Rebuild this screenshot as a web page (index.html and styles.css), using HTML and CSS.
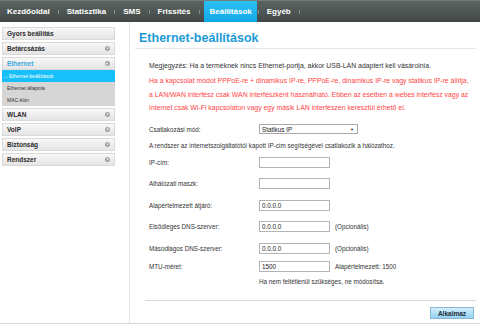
FILE: index.html
```html
<!DOCTYPE html>
<html lang="hu">
<head>
    <meta charset="UTF-8">
    <title>Ethernet-beállítások</title>
    <link rel="stylesheet" href="styles.css">
</head>
<body>
    <!-- FELSŐ MENÜ -->
    <nav class="topnav">
        <a href="#" class="tab">Kezdőoldal</a><span class="sep"></span>
        <a href="#" class="tab">Statisztika</a><span class="sep"></span>
        <a href="#" class="tab">SMS</a><span class="sep"></span>
        <a href="#" class="tab">Frissítés</a><span class="sep"></span>
        <a href="#" class="tab active">Beállítások</a><span class="sep"></span>
        <a href="#" class="tab">Egyéb</a><span class="sep"></span>
    </nav>

    <div class="layout">
        <!-- OLDALSÁV -->
        <aside class="sidebar">
            <a href="#" class="side-item">Gyors beállítás</a>
            <a href="#" class="side-item has-sub">Betárcsázás<span class="dot"></span></a>
            <div class="side-group">
                <a href="#" class="side-item open">Ethernet<span class="dot down"></span></a>
                <div class="submenu">
                    <a href="#" class="sub-item current">Ethernet-beállítások</a>
                    <a href="#" class="sub-item">Ethernet állapota</a>
                    <a href="#" class="sub-item">MAC-klón</a>
                </div>
            </div>
            <a href="#" class="side-item has-sub">WLAN<span class="dot"></span></a>
            <a href="#" class="side-item has-sub">VoIP<span class="dot"></span></a>
            <a href="#" class="side-item has-sub">Biztonság<span class="dot"></span></a>
            <a href="#" class="side-item has-sub">Rendszer<span class="dot"></span></a>
        </aside>

        <!-- TARTALOM -->
        <main class="main">
            <h1 class="page-title">Ethernet-beállítások</h1>

            <div class="content">
                <p class="note">Megjegyzés: Ha a terméknek nincs Ethernet-portja, akkor USB-LAN adaptert kell vásárolnia.</p>
                <p class="warning">Ha a kapcsolat módot PPPoE-re + dinamikus IP-re, PPPoE-re, dinamikus IP-re vagy statikus IP-re állítja, a LAN/WAN interfész csak WAN interfészként használható. Ebben az esetben a webes interfész vagy az Internet csak Wi-Fi kapcsolaton vagy egy másik LAN interfészen keresztül érhető el.</p>

                <div class="form-row mode-row">
                    <label for="mode">Csatlakozási mód:</label>
                    <div class="select">Statikus IP<span class="caret">▼</span></div>
                </div>
                <p class="info">A rendszer az internetszolgáltatótól kapott IP-cím segítségével csatlakozik a hálózathoz.</p>

                <div class="fields">
                    <div class="form-row">
                        <label>IP-cím:</label>
                        <input type="text" value="">
                    </div>
                    <div class="form-row">
                        <label>Alhálózati maszk:</label>
                        <input type="text" value="">
                    </div>
                    <div class="form-row">
                        <label>Alapértelmezett átjáró:</label>
                        <input type="text" value="0.0.0.0">
                    </div>
                    <div class="form-row">
                        <label>Elsődleges DNS-szerver:</label>
                        <input type="text" value="0.0.0.0">
                        <span class="hint">(Opcionális)</span>
                    </div>
                    <div class="form-row">
                        <label>Másodlagos DNS-szerver:</label>
                        <input type="text" value="0.0.0.0">
                        <span class="hint">(Opcionális)</span>
                    </div>
                    <div class="form-row mtu-row">
                        <label>MTU-méret:</label>
                        <input type="text" value="1500">
                        <span class="hint">Alapértelmezett: 1500</span>
                    </div>
                    <p class="mtu-note">Ha nem feltétlenül szükséges, ne módosítsa.</p>
                </div>
            </div>

            <div class="actions">
                <button type="button" class="apply-button">Alkalmaz</button>
            </div>
        </main>
    </div>
</body>
</html>
```

FILE: styles.css
```css
/* Alap */
body, html {
    margin: 0;
    padding: 0;
    font-family: 'Liberation Sans', Arial, sans-serif;
    background-color: white;
    color: #333;
}

/* Felső menü */
.topnav {
    height: 22px;
    display: flex;
    align-items: center;
    background: linear-gradient(#5c6462, #414847);
    border-top: 1px solid #757d7b;
    box-sizing: border-box;
}

.tab {
    height: 100%;
    display: flex;
    align-items: center;
    padding: 0 7px;
    color: white;
    font-size: 8px;
    font-weight: 700;
    text-decoration: none;
}

.tab.active {
    background: linear-gradient(#2cc0f6, #10a9e8);
    padding: 0 5px 0 6px;
    margin-left: 3px;
}

.sep {
    width: 1px;
    height: 4px;
    background-color: #848c8a;
    margin: 0 1px;
}

/* Elrendezés */
.layout {
    display: grid;
    grid-template-columns: 130px 1fr;
    height: 301px;
    border-bottom: 1px solid #d6d6d6;
}

.sidebar {
    border-right: 1px solid #e2e2e2;
    padding: 5px 14px 0 2px;
    display: flex;
    flex-direction: column;
    gap: 2px;
}

.side-item {
    position: relative;
    height: 13px;
    box-sizing: border-box;
    display: flex;
    align-items: center;
    padding-left: 4px;
    border: 1px solid #dadada;
    background: linear-gradient(#f8f8f8, #e4e4e4);
    color: #2b2b2b;
    font-size: 6.5px;
    font-weight: 700;
    text-decoration: none;
}

.side-item.open {
    color: #3aa7dc;
}

.dot {
    position: absolute;
    right: 4px;
    top: 3px;
    width: 5px;
    height: 5px;
    border-radius: 50%;
    background-color: #a3a3a3;
}

.dot::after {
    content: "";
    position: absolute;
    left: 2px;
    top: 1px;
    border-left: 2px solid white;
    border-top: 1.5px solid transparent;
    border-bottom: 1.5px solid transparent;
}

.dot.down::after {
    left: 1px;
    top: 2px;
    border-top: 2px solid white;
    border-left: 1.5px solid transparent;
    border-right: 1.5px solid transparent;
    border-bottom: none;
}

.submenu {
    display: flex;
    flex-direction: column;
    background-color: #d6d6d6;
}

.sub-item {
    height: 12px;
    display: flex;
    align-items: center;
    padding-left: 5px;
    font-size: 5px;
    color: #333;
    text-decoration: none;
}

.sub-item.current {
    background-color: #17c0f8;
    color: white;
    padding-left: 1px;
}

.sub-item.current::before {
    content: "→";
    margin-right: 1px;
}

/* Tartalom */
.main {
    display: flex;
    flex-direction: column;
    padding: 0 4px 0 5px;
}

.page-title {
    margin: 0;
    padding: 9px 0 3px 4px;
    font-size: 12.5px;
    font-weight: 700;
    color: #1d9ad6;
    border-bottom: 1px solid #e6e6e6;
}

.content {
    padding: 0 6px 0 14px;
    font-size: 6.3px;
    color: #333;
    flex: 1;
}

.content p {
    margin: 0;
}

.note {
    font-size: 6.9px;
    margin-top: 13px !important;
}

.warning {
    font-size: 6.9px;
    color: #ff4444;
    line-height: 13.5px;
    margin-top: 5px !important;
}

.form-row {
    display: flex;
    align-items: center;
    height: 11px;
}

.form-row label {
    width: 110px;
    flex-shrink: 0;
}

.mode-row {
    margin-top: 9px;
}

.select {
    width: 99px;
    height: 10px;
    box-sizing: border-box;
    border: 1px solid #a9a9a9;
    display: flex;
    align-items: center;
    justify-content: space-between;
    padding: 0 3px 0 2px;
    color: #222;
}

.caret {
    font-size: 4px;
}

.info {
    margin-top: 7px !important;
}

.fields {
    display: flex;
    flex-direction: column;
    gap: 10.5px;
    margin-top: 8px;
}

.form-row input {
    width: 71px;
    height: 11px;
    box-sizing: border-box;
    border: 1px solid #b4b4b4;
    padding: 0 2px;
    font-family: 'Liberation Sans', Arial, sans-serif;
    font-size: 6.3px;
    color: #222;
}

.hint {
    margin-left: 5px;
}

.mtu-row {
    margin-top: -3px;
}

.mtu-note {
    margin: -5px 0 0 110px !important;
}

.actions {
    display: flex;
    justify-content: flex-end;
    border-top: 1px solid #d8d8d8;
    margin-left: 10px;
    padding: 6px 2px 4px;
}

.apply-button {
    width: 44px;
    height: 12px;
    padding: 0;
    border: 1px solid #88b9d3;
    background: linear-gradient(#d4effc, #92d3f2);
    font-family: 'Liberation Sans', Arial, sans-serif;
    font-size: 6.5px;
    font-weight: 700;
    color: #1f2f3a;
}
```
